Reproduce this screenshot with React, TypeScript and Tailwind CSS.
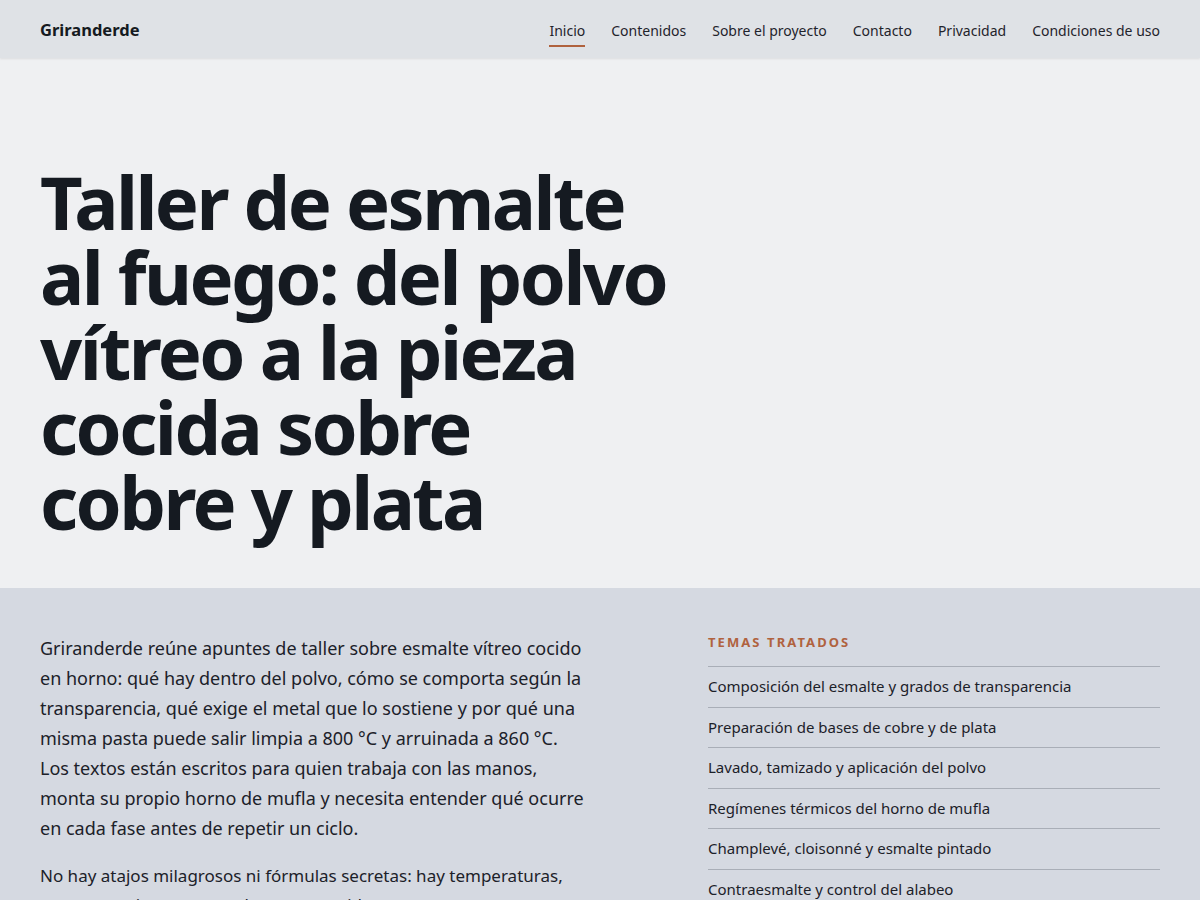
const nav = ["Inicio", "Contenidos", "Sobre el proyecto", "Contacto", "Privacidad", "Condiciones de uso"];

const temas = [
  "Composición del esmalte y grados de transparencia",
  "Preparación de bases de cobre y de plata",
  "Lavado, tamizado y aplicación del polvo",
  "Regímenes térmicos del horno de mufla",
  "Champlevé, cloisonné y esmalte pintado",
  "Contraesmalte y control del alabeo",
  "Defectos frecuentes y cómo corregirlos",
];

export default function App() {
  return (
    <div className="min-h-screen bg-[#d5d9e1] text-[#151a21]" style={{ fontFamily: '"Noto Sans", "Open Sans", sans-serif' }}>
      <header className="relative z-10 flex h-[58px] items-center justify-between bg-[#dfe2e6] px-10 pt-[2px] shadow-[0_1px_2px_rgba(0,0,0,0.08)]">
        <a className="text-[16.5px] font-bold text-[#151a21]">Griranderde</a>
        <nav className="flex items-center gap-[26px] text-[14px] text-[#1f242c]">
          {nav.map((item, i) => (
            <a key={item} className="relative">
              {item}
              {i === 0 ? <span className="absolute -bottom-[6px] left-0 right-0 h-[2px] bg-[#b0623e]" /> : null}
            </a>
          ))}
        </nav>
      </header>

      <section className="bg-[#eff0f2] px-10 pb-[49px] pt-[106px]">
        <h1 className="max-w-[640px] text-[74px] font-bold leading-[75px] tracking-[-0.035em] text-[#151a21]">
          Taller de esmalte al fuego: del polvo vítreo a la pieza cocida sobre cobre y plata
        </h1>
      </section>

      <section className="grid grid-cols-[minmax(0,1fr)_452px] gap-[108px] px-10 pb-16 pt-[45px]">
        <div className="max-w-[546px] text-[#1c2129]">
          <p className="text-[18px] leading-[30px]">
            Griranderde reúne apuntes de taller sobre esmalte vítreo cocido en horno: qué hay dentro del polvo, cómo se comporta según la
            transparencia, qué exige el metal que lo sostiene y por qué una misma pasta puede salir limpia a 800 °C y arruinada a 860 °C.
            Los textos están escritos para quien trabaja con las manos, monta su propio horno de mufla y necesita entender qué ocurre en
            cada fase antes de repetir un ciclo.
          </p>
          <p className="mt-[18px] text-[17px] leading-[29px]">
            No hay atajos milagrosos ni fórmulas secretas: hay temperaturas, espesores, tiempos, metales que se oxidan y capas que se
            contraen, y la paciencia de anotar cada prueba para entender el resultado.
          </p>
        </div>

        <aside className="-mt-px">
          <h2 className="text-[13px] font-bold uppercase leading-5 tracking-[0.16em] text-[#b0623e]">Temas tratados</h2>
          <ul className="mt-[14px] border-t border-[#a9aeb7]">
            {temas.map((t) => (
              <li key={t} className="border-b border-[#a9aeb7] py-[9px] text-[15px] leading-[21.5px] text-[#1c2129]">
                {t}
              </li>
            ))}
          </ul>
        </aside>
      </section>
    </div>
  );
}
